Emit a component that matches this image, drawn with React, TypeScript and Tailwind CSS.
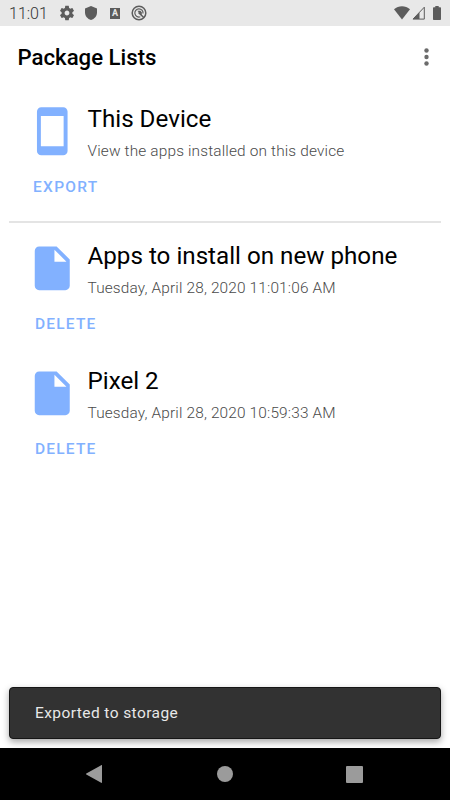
import { useState } from 'react'

interface PackageList {
  id:    string
  name:  string
  saved: string
}

const initialLists: PackageList[] = [
  { id: 'new-phone', name: 'Apps to install on new phone', saved: 'Tuesday, April 28, 2020 11:01:06 AM' },
  { id: 'pixel-2',   name: 'Pixel 2',                      saved: 'Tuesday, April 28, 2020 10:59:33 AM' },
]

const PHONE_PATH = 'M17 1.01L7 1c-1.1 0-1.99.9-1.99 2v18c0 1.1.89 2 1.99 2h10c1.1 0 2-.9 2-2V3c0-1.1-.9-1.99-2-1.99zM17.2 18.9H6.8V5h10.4v13.9z'
const FILE_PATH  = 'M6 2c-1.1 0-1.99.9-1.99 2L4 20c0 1.1.89 2 1.99 2H18c1.1 0 2-.9 2-2V8l-6-6H6zm7 7V3.5L18.5 9H13z'
const GEAR_PATH  = 'M19.14 12.94c.04-.3.06-.61.06-.94 0-.32-.02-.64-.07-.94l2.03-1.58c.18-.14.23-.41.12-.61l-1.92-3.32c-.12-.22-.37-.29-.59-.22l-2.39.96c-.5-.38-1.03-.7-1.62-.94l-.36-2.54c-.04-.24-.24-.41-.48-.41h-3.84c-.24 0-.43.17-.47.41l-.36 2.54c-.59.24-1.13.57-1.62.94l-2.39-.96c-.22-.08-.47 0-.59.22L2.74 8.87c-.12.21-.08.47.12.61l2.03 1.58c-.05.3-.09.63-.09.94s.02.64.07.94l-2.03 1.58c-.18.14-.23.41-.12.61l1.92 3.32c.12.22.37.29.59.22l2.39-.96c.5.38 1.03.7 1.62.94l.36 2.54c.05.24.24.41.48.41h3.84c.24 0 .44-.17.47-.41l.36-2.54c.59-.24 1.13-.56 1.62-.94l2.39.96c.22.08.47 0 .59-.22l1.92-3.32c.12-.22.07-.47-.12-.61l-2.01-1.58zM12 15.2c-1.76 0-3.2-1.44-3.2-3.2s1.44-3.2 3.2-3.2 3.2 1.44 3.2 3.2-1.44 3.2-3.2 3.2z'

function StatusBar() {
  return (
    <div className="flex h-[26px] shrink-0 items-center bg-[#e8e8e8] pl-[9px] text-[#5c5c5c]">
      <span className="mt-[2px] w-[49px] text-[16px] leading-none font-light text-[#333333]">11:01</span>
      <svg className="size-[18px] shrink-0" viewBox="0 0 24 24" fill="currentColor">
        <path d={GEAR_PATH} />
      </svg>
      <svg className="ml-[9px] h-[14px] w-3 shrink-0" viewBox="0 0 12 14" fill="currentColor">
        <path d="M6 0L0 2.4v4.1C0 10 2.5 13 6 14c3.500-1 6-4 6-7.500V2.400z" />
      </svg>
      <span className="ml-[13px] flex h-[11px] w-[10px] items-center justify-center bg-[#5c5c5c] text-[9px] leading-none font-bold text-[#e8e8e8]">A</span>
      <svg className="ml-[11px] size-4 shrink-0" viewBox="0 0 16 16" fill="none" stroke="currentColor">
        <circle cx="8" cy="8" r="6.800" strokeWidth="1.500" />
        <path d="M9.300 11.800A4.100 4.100 0 1 1 12 8.500" strokeWidth="1.200" />
        <path d="M7.500 7.500L13 12.800" strokeWidth="1.500" />
        <path d="M6.300 5.800h3l1.500 1.500v3z" fill="currentColor" stroke="none" />
      </svg>
      <svg className="ml-auto h-[14px] w-4" viewBox="0 0 16 14" fill="currentColor">
        <path d="M0 3.200C4.500-.7 11.500-.7 16 3.200L8 13.500z" />
      </svg>
      <svg className="ml-[2px] h-[14px] w-[13px]" viewBox="0 0 13 14">
        <path d="M7 7v6H1z" fill="currentColor" />
        <path d="M12.300 1.200v11.900H1z" fill="none" stroke="currentColor" />
        <path d="M7 7v6" stroke="currentColor" />
      </svg>
      <svg className="mr-[9px] ml-2 h-[14px] w-2" viewBox="0 0 8 14" fill="currentColor">
        <path d="M2.300 0h3.400v1.200H7c.6 0 1 .4 1 1V13c0 .6-.4 1-1 1H1c-.6 0-1-.4-1-1V2.200c0-.6.4-1 1-1h1.300z" />
      </svg>
    </div>
  )
}

function ListEntry({ icon, title, subtitle }: { icon: string; title: string; subtitle: string }) {
  return (
    <div className="flex pl-[26px]">
      <svg className="size-[52.500px] shrink-0" viewBox="0 0 24 24" fill="#82b1ff">
        <path d={icon} />
      </svg>
      <div className="ml-[9px] whitespace-nowrap">
        <h2 className="text-[24.200px] leading-[28px] text-black">{title}</h2>
        <p className="mt-[9px] text-[15.400px] leading-[18px] font-light tracking-[0.160px] text-[#4a4a4a]">{subtitle}</p>
      </div>
    </div>
  )
}

export default function App() {
  const [lists,   setLists]   = useState<PackageList[]>(initialLists)
  const [message, setMessage] = useState('Exported to storage')

  const deleteList = (id: string) => {
    setLists(prev => prev.filter(l => l.id !== id))
  }

  return (
    <div className="relative flex h-[800px] w-[450px] flex-col overflow-hidden bg-white font-['Roboto',sans-serif]">
      <StatusBar />

      <header className="flex h-16 shrink-0 items-center justify-between pr-[21.500px] pl-[17.500px]">
        <h1 className="mb-px text-[22.200px] leading-none font-medium text-black">Package Lists</h1>
        <button aria-label="More options" className="mb-[2px]">
          <svg className="h-[18px] w-[5px]" viewBox="0 0 5 18" fill="#6b6b6b">
            <circle cx="2.500" cy="2.500" r="2.200" />
            <circle cx="2.500" cy="9" r="2.200" />
            <circle cx="2.500" cy="15.500" r="2.200" />
          </svg>
        </button>
      </header>

      <main className="flex-1">
        <section className="h-[131px] pt-[15px]">
          <ListEntry icon={PHONE_PATH} title="This Device" subtitle="View the apps installed on this device" />
          <button
            onClick={() => setMessage('Exported to storage')}
            className="mt-[18px] ml-[33px] block text-[15.500px] leading-[18px] font-medium tracking-[1.300px] text-[#82b1ff]"
          >
            EXPORT
          </button>
        </section>
        <hr className="mx-[9px] h-[2px] border-0 bg-[#e4e4e4]" />
        <div className="pt-[19px]">
          {lists.map(l => (
            <section key={l.id} className="h-[125px]">
              <ListEntry icon={FILE_PATH} title={l.name} subtitle={l.saved} />
              <button
                onClick={() => deleteList(l.id)}
                className="mt-[18px] ml-[35px] block text-[15.500px] leading-[18px] font-medium tracking-[1.200px] text-[#82b1ff]"
              >
                DELETE
              </button>
            </section>
          ))}
        </div>
      </main>

      {message && (
        <div
          role="status"
          onClick={() => setMessage('')}
          className="absolute inset-x-[9px] bottom-[61px] flex h-[52px] items-center rounded-[4px] border border-[#161616] bg-[#323232] pt-[2px] pl-[25px] text-[15.500px] tracking-[0.420px] text-[#e8e8e8] shadow-[0_3px_7px_rgba(0,0,0,0.350)]"
        >
          {message}
        </div>
      )}

      <nav className="relative flex h-[52px] shrink-0 items-center bg-black">
        <svg className="ml-[86px] h-[18px] w-4" viewBox="0 0 16 18" fill="#9b9b9b">
          <path d="M16 .5v17c0 .5-.4.5-.8.300L.3 9.400c-.4-.2-.4-.6 0-.8L15.200.2c.4-.2.8-.2.8.300z" />
        </svg>
        <span className="ml-[115px] size-4 rounded-full bg-[#9b9b9b]" />
        <span className="ml-[113px] size-[17px] rounded-[1px] bg-[#9b9b9b]" />
      </nav>
    </div>
  )
}
